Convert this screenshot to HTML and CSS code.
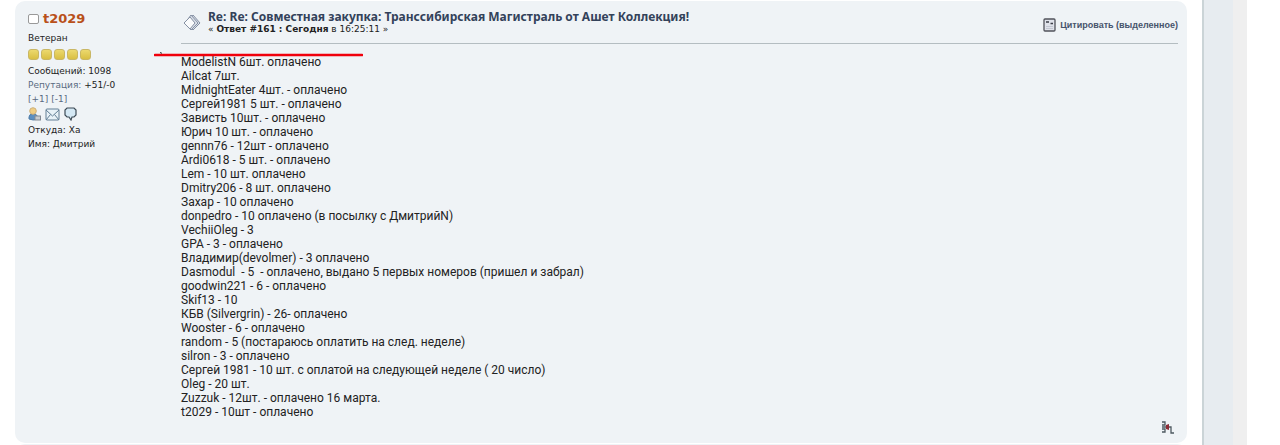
FILE: index.html
```
<!DOCTYPE html>
<html lang="ru">
<head>
<meta charset="utf-8">
<title>Совместная закупка: Транссибирская Магистраль</title>
<link rel="stylesheet" href="styles.css">
</head>
<body>
<div class="page">
<main class="content">
<article class="post">
<aside class="poster">
<div class="poster-name"><input type="checkbox" id="pick" aria-label="Выбрать сообщение"><a href="#t2029">t2029</a></div>
<p>Ветеран</p>
<div class="stars"><i></i><i></i><i></i><i></i><i></i></div>
<p class="info">Сообщений: 1098</p>
<p class="info"><a href="#rep">Репутация:</a> +51/-0</p>
<p class="info"><a href="#plus">[+1]</a> <a href="#minus">[-1]</a></p>
<div class="contacts">
<a href="#profile" aria-label="Профиль"><svg width="13" height="14" viewBox="0 0 13 14"><path d="M1 12V10Q1 7 5 7Q10 7 10 12Q5 14 1 12Z" fill="#5c8fc0" stroke="#4d7ba6"/><circle cx="5" cy="4" r="3.300" fill="#f0ce83" stroke="#cdb07a"/><rect x="7" y="9" width="5.500" height="4" fill="#c7ccd1" stroke="#818992"/></svg></a>
<a href="#mail" aria-label="Письмо"><svg width="15" height="14" viewBox="0 0 15 14"><rect x="1" y="2" width="13" height="11" rx="1" fill="#e8f2f8" stroke="#627f95"/><path d="M1 3L7.500 9L14 3M1 13L5.500 7.500M14 13L9.500 7.500" fill="none" stroke="#627f95"/></svg></a>
<a href="#pm" aria-label="Личное сообщение"><svg width="13" height="14" viewBox="0 0 13 14"><path d="M3 1H10L12 3V8L10 10H8L7 13L5 10H3L1 8V3Z" fill="#d4e8f4" stroke="#3d4b56" stroke-width="1.200"/></svg></a>
</div>
<p class="info">Откуда: Ха</p>
<p class="info">Имя: Дмитрий</p>
</aside>
<section class="body">
<header class="head">
<svg class="topic-icon" width="18" height="18" viewBox="0 0 18 18"><g fill="#d9dfe8" stroke="#8590a3"><path d="M10 1L17 9L10 16L4 9Z"/><path d="M8 1L15 9L8 16L2 9Z"/><path d="M7 3L12 9L7 15L1 9Z" fill="#fafbfc"/></g></svg>
<div class="titles"><h1><a href="#msg">Re: Re: Совместная закупка: Транссибирская Магистраль от Ашет Коллекция!</a></h1>
<p>« <b>Ответ #161 : Сегодня</b> в 16:25:11 »</p></div>
<a class="quote" href="#quote"><svg width="13" height="14" viewBox="0 0 13 14"><rect x="1" y="1" width="11" height="12" rx="1" fill="#dfe2ea" stroke="#51535b" stroke-width="1.300"/><path d="M3 4H6M7.500 5.500H10" stroke="#3c3f48" stroke-width="1.300"/><path d="M3 8.500H10M3 10.500H10" stroke="#c3c7d2"/></svg>Цитировать (выделенное)</a>
</header>
<div class="message">ModelistN 6шт. оплачено
Ailcat 7шт.
MidnightEater 4шт. - оплачено
Сергей1981 5 шт. - оплачено
Зависть 10шт. - оплачено
Юрич 10 шт. - оплачено
gennn76 - 12шт - оплачено
Ardi0618 - 5 шт. - оплачено
Lem - 10 шт. оплачено
Dmitry206 - 8 шт. оплачено
Захар - 10 оплачено
donpedro - 10 оплачено (в посылку с ДмитрийN)
VechiiOleg - 3
GPA - 3 - оплачено
Владимир(devolmer) - 3 оплачено
Dasmodul  - 5  - оплачено, выдано 5 первых номеров (пришел и забрал)
goodwin221 - 6 - оплачено
Skif13 - 10
КБВ (Silvergrin) - 26- оплачено
Wooster - 6 - оплачено
random - 5 (постараюсь оплатить на след. неделе)
silron - 3 - оплачено
Сергей 1981 - 10 шт. с оплатой на следующей неделе ( 20 число)
Oleg - 20 шт.
Zuzzuk - 12шт. - оплачено 16 марта.
t2029 - 10шт - оплачено</div>
<svg class="underline" viewBox="0 0 209 5" width="209" height="5"><path d="M1 3H208" stroke="#f0000c" stroke-width="2.600" stroke-linecap="round"/><path d="M6 .5l2 .8" stroke="#333"/></svg>
<footer><svg width="14" height="14" viewBox="0 0 14 14"><path d="M1 1H4V4H1M1 6H5M1 11H4V8H1M8 6H10V12H13" fill="none" stroke="#4e5960" stroke-width="1.300"/><path d="M5 4L8 3V9L5 8Z" fill="#8d2b35"/></svg></footer>
</section>
</article>
<div class="next-post"></div>
</main>
<div class="gutter"></div>
<div class="scroll"></div>
</div>
</body>
</html>
```
FILE: styles.css
```
* { box-sizing: border-box; }
body { margin: 0; background: #fff; color: #222; font-family: "DejaVu Sans", sans-serif; font-size: 9px; overflow: hidden; }
a { color: #5a6b82; text-decoration: none; }
p, h1 { margin: 0; }
svg { display: block; }
.page { display: flex; margin-right: 33px; }
.content { flex: 1; padding: 1px 15px 0; border-right: 2px solid #cbd4d7; }
.post { display: flex; background: #eff3f6; border-radius: 10px; padding: 9px 9px 8px 13px; }
.poster { flex: 0 0 153px; line-height: 13px; }
.poster-name { display: flex; align-items: center; gap: 4px; height: 17px; margin-bottom: 5px; font-size: 13px; font-weight: bold; }
.poster-name a { color: #b9501a; }
.poster-name input { appearance: none; width: 11px; height: 10px; margin: 0; border: 1px solid #999; border-radius: 2px; background: #fff; }
.stars { display: flex; gap: 2px; margin: 4px 0; }
.stars i { width: 11px; height: 11px; border: 1px solid #c9b765; border-radius: 3px; background: linear-gradient(#ecd96e, #d9bf42); }
.info { line-height: 14px; }
.contacts { display: flex; gap: 4px; margin: 1px 0 2px; }
.body { position: relative; flex: 1; min-width: 0; }
.head { display: flex; align-items: flex-start; height: 34px; border-bottom: 1px solid #b4bdc1; }
.topic-icon { margin: 4px 7px 0 2px; }
.titles { flex: 1; line-height: 13px; }
h1 { font: bold 12px/13px "Noto Sans", sans-serif; }
h1 a { color: #33425a; }
.quote { display: flex; align-items: center; gap: 4px; margin-top: 8px; color: #47536c; font: bold 9px/14px "Liberation Sans", sans-serif; }
.message { margin-top: 11px; font-family: Roboto, sans-serif; font-size: 12px; line-height: 14px; white-space: pre-wrap; }
.underline { position: absolute; left: -27px; top: 42px; }
footer { display: flex; justify-content: flex-end; padding: 2px 3px 0 0; }
.next-post { height: 10px; margin-top: 1px; border-radius: 10px 10px 0 0; background: #eff3f6; }
.gutter { width: 29px; background: #e7ecf0; }
.scroll { width: 14px; background: #efefef; }
```
